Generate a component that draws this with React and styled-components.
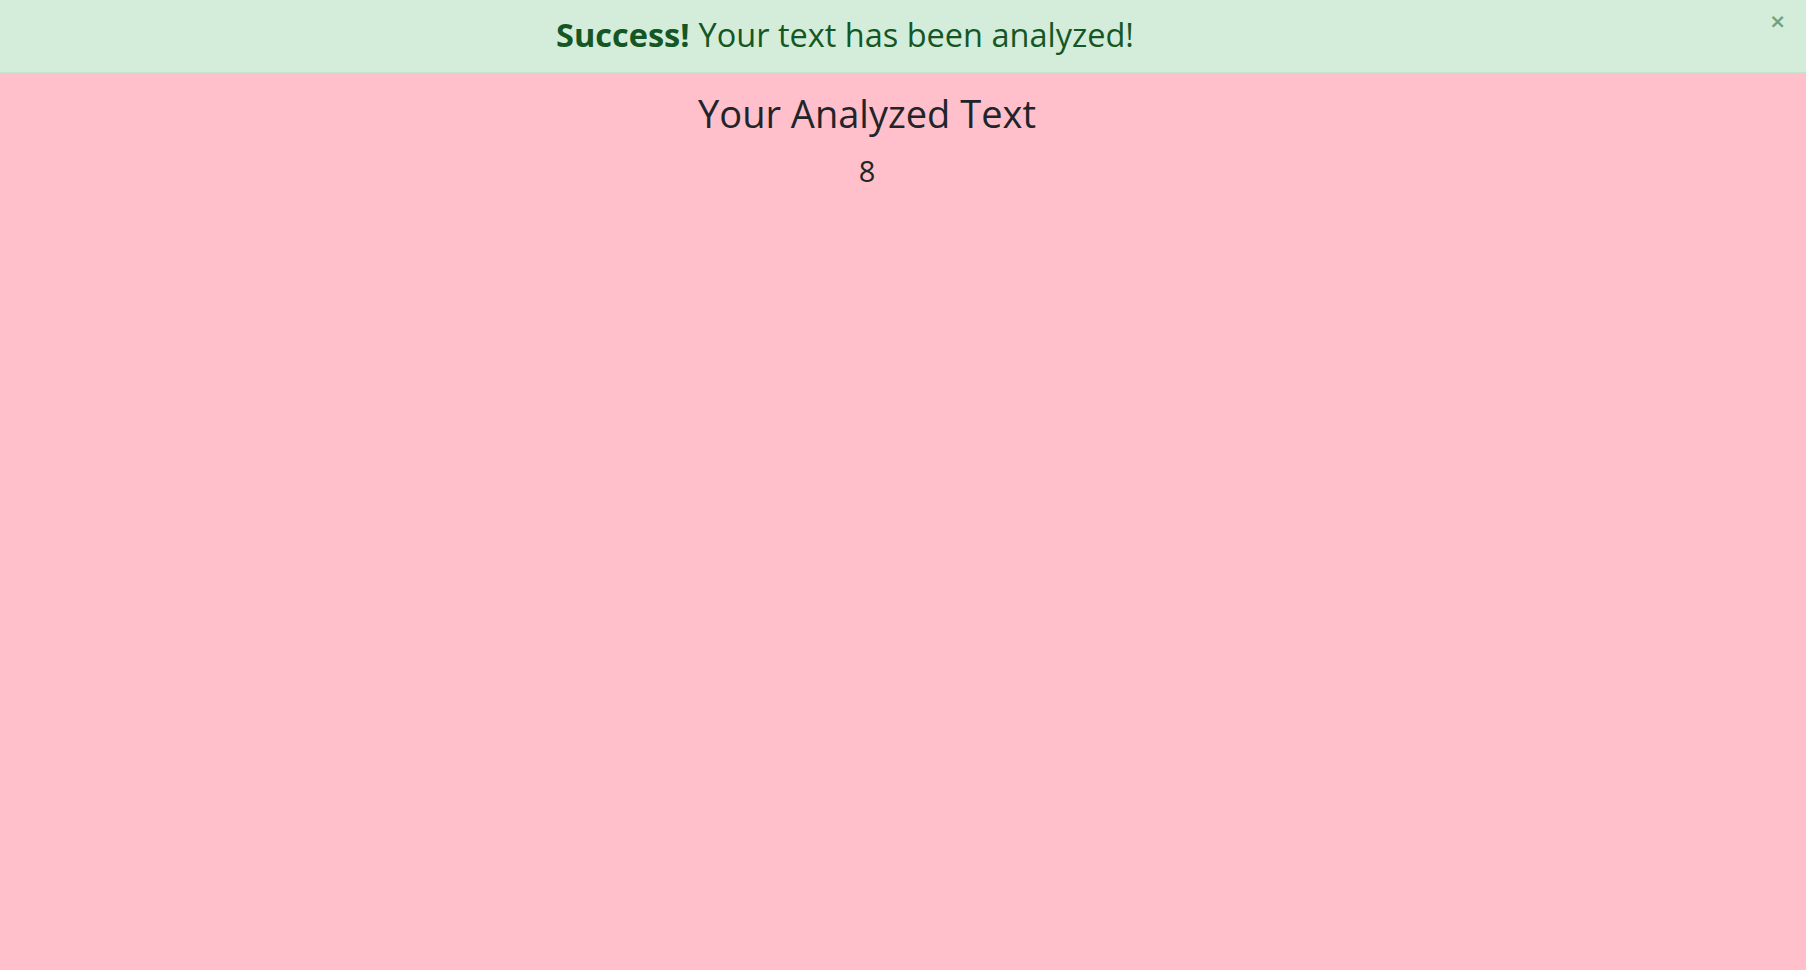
import React from "react";
import styled, { createGlobalStyle } from "styled-components";

const GlobalStyle = createGlobalStyle`
  html, body {
    margin: 0;
    padding: 0;
    background: pink;
    font-family: "Open Sans", "Noto Sans", sans-serif;
    color: #212529;
  }
`;

const Page = styled.div`
  min-height: 970px;
  background: pink;
`;

const Alert = styled.div`
  position: relative;
  height: 73px;
  box-sizing: border-box;
  display: flex;
  align-items: center;
  justify-content: center;
  padding: 0 136px 4px 20px;
  background: #d4edda;
  border-bottom: 1px solid #c3e6cb;
  color: #155724;
  font-size: 32.5px;
`;

const Strong = styled.strong`
  font-weight: 700;
  margin-right: 9px;
`;

const Close = styled.button`
  position: absolute;
  top: 11px;
  right: 20px;
  border: 0;
  background: transparent;
  padding: 0;
  color: #155724;
  opacity: 0.5;
  font-family: "DejaVu Sans", sans-serif;
  font-size: 20px;
  font-weight: 700;
  line-height: 1;
  cursor: pointer;
`;

const Content = styled.div`
  display: flex;
  flex-direction: column;
  align-items: center;
  padding: 16px 72px 0 0;
`;

const Title = styled.h1`
  margin: 0;
  font-size: 38px;
  font-weight: 400;
  line-height: 48px;
`;

const Count = styled.p`
  margin: 14px 0 0;
  font-size: 29px;
  line-height: 40px;
`;

export default function App() {
  return (
    <Page>
      <GlobalStyle />
      <Alert>
        <Strong>Success!</Strong> Your text has been analyzed!
        <Close aria-label="Close">×</Close>
      </Alert>
      <Content>
        <Title>Your Analyzed Text</Title>
        <Count>8</Count>
      </Content>
    </Page>
  );
}
